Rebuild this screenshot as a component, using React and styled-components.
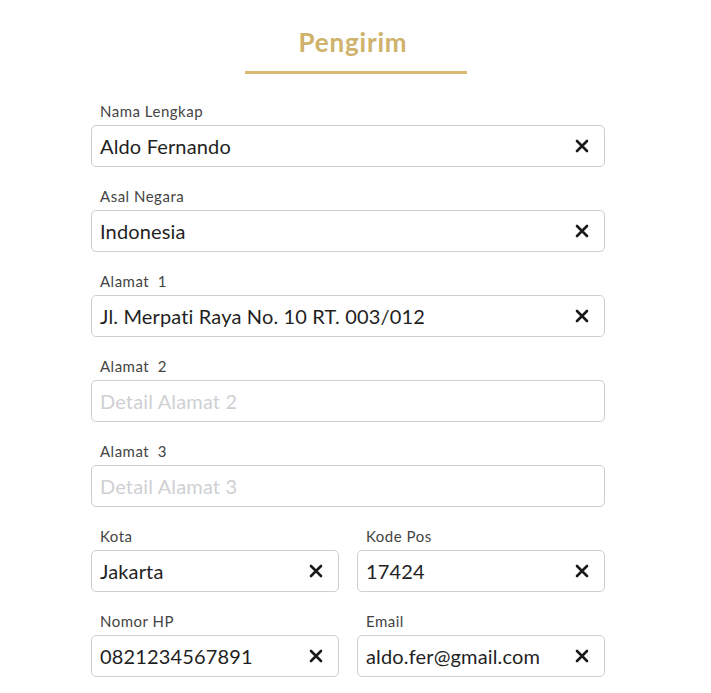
import React from "react";
import styled, { createGlobalStyle } from "styled-components";

const Global = createGlobalStyle`
  html, body { margin: 0; padding: 0; background: #fff; }
  body { font-family: "Lato", "Noto Sans", sans-serif; }
`;

const Page = styled.div`
  width: 711px;
  padding-top: 26px;
`;

const Header = styled.div`
  display: flex;
  flex-direction: column;
  align-items: center;
  padding-left: 1px;
`;

const Title = styled.h2`
  margin: 0 6px 0 0;
  font-size: 26px;
  font-weight: 700;
  line-height: 32px;
  color: #cfb26b;
  letter-spacing: 0.8px;
`;

const Underline = styled.div`
  width: 222px;
  height: 3px;
  margin-top: 13px;
  background: #d6b96e;
`;

const Form = styled.div`
  margin-top: 28px;
  margin-left: 91px;
  width: 514px;
  display: grid;
  grid-template-columns: 1fr 1fr;
  column-gap: 18px;
  row-gap: 20px;
`;

const Field = styled.div`
  grid-column: ${(p) => (p.$half ? "span 1" : "span 2")};
  display: flex;
  flex-direction: column;
`;

const Label = styled.label`
  font-size: 15px;
  line-height: 18px;
  letter-spacing: 0.5px;
  color: #444;
  padding-left: 9px;
  margin-bottom: 5px;
  white-space: pre;
`;

const Box = styled.div`
  height: 42px;
  box-sizing: border-box;
  border: 1px solid #ccced4;
  border-radius: 5px;
  display: flex;
  align-items: center;
  padding: 0 15px 0 8px;
`;

const Value = styled.span`
  flex: 1;
  font-size: 20px;
  letter-spacing: 0.15px;
  color: ${(p) => (p.$placeholder ? "#cfd0d3" : "#1f1f1f")};
  white-space: nowrap;
`;

const ClearIcon = () => (
  <svg width="14" height="14" viewBox="0 0 14 14">
    <path d="M2 2 L12 12 M12 2 L2 12" stroke="#1a1a1a" strokeWidth="2.6" strokeLinecap="round" />
  </svg>
);

const Input = ({ label, value, placeholder, half }) => (
  <Field $half={half}>
    <Label>{label}</Label>
    <Box>
      <Value $placeholder={!value}>{value || placeholder}</Value>
      {value && <ClearIcon />}
    </Box>
  </Field>
);

export default function App() {
  return (
    <Page>
      <Global />
      <Header>
        <Title>Pengirim</Title>
        <Underline />
      </Header>
      <Form>
        <Input label="Nama Lengkap" value="Aldo Fernando" />
        <Input label="Asal Negara" value="Indonesia" />
        <Input label="Alamat  1" value="Jl. Merpati Raya No. 10 RT. 003/012" />
        <Input label="Alamat  2" placeholder="Detail Alamat 2" />
        <Input label="Alamat  3" placeholder="Detail Alamat 3" />
        <Input half label="Kota" value="Jakarta" />
        <Input half label="Kode Pos" value="17424" />
        <Input half label="Nomor HP" value="0821234567891" />
        <Input half label="Email" value="aldo.fer@gmail.com" />
      </Form>
    </Page>
  );
}
